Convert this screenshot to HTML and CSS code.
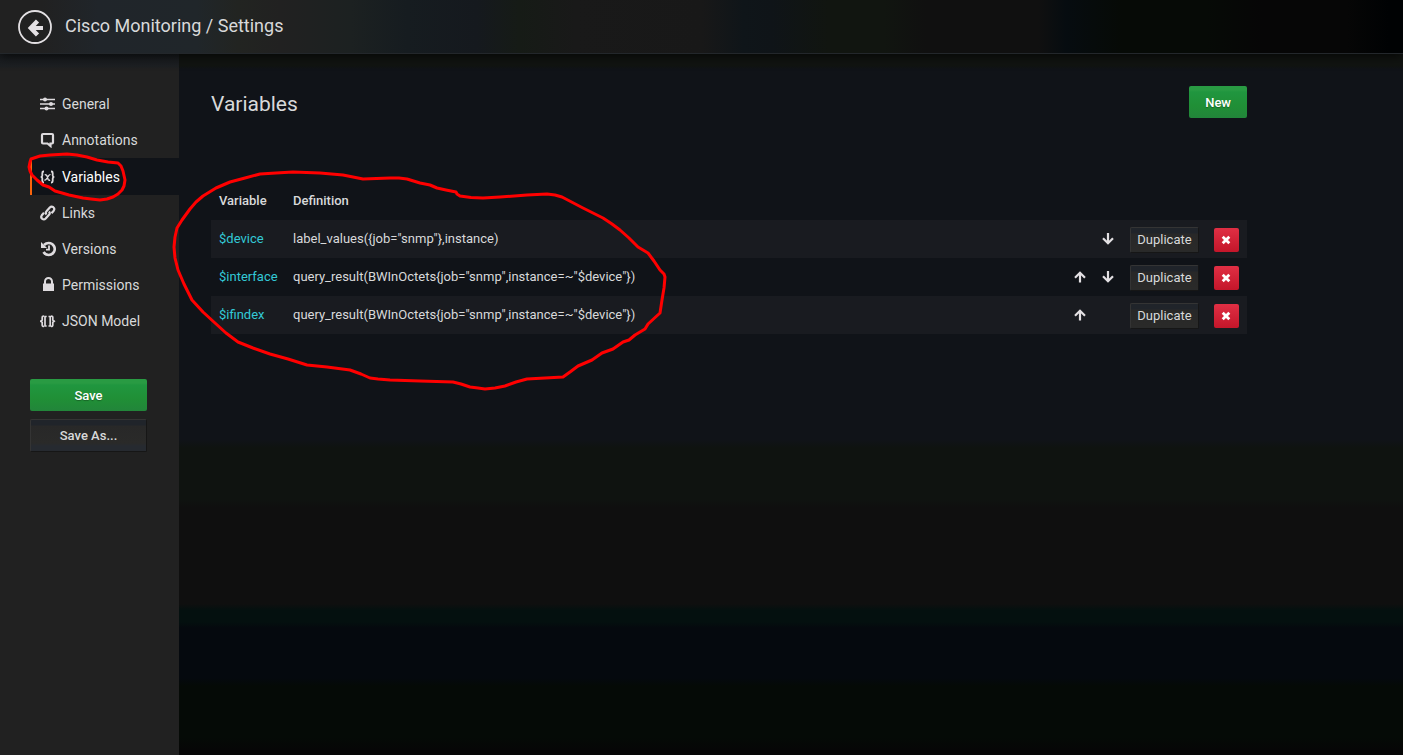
FILE: index.html
```html
<!DOCTYPE html>
<html lang="en">
<head>
<meta charset="utf-8">
<meta name="viewport" content="width=device-width, initial-scale=1">
<title>Cisco Monitoring / Settings</title>
<link rel="stylesheet" href="styles.css">
</head>
<body>
<svg class="sprite" aria-hidden="true">
  <symbol id="up" viewBox="0 0 12 12"><path d="M6 11.500V2M1 6.700 6 1.700l5 5" fill="none" stroke="currentColor" stroke-width="2.200"/></symbol>
  <symbol id="down" viewBox="0 0 12 12"><path d="M6 0V10M1 5.300l5 5 5-5" fill="none" stroke="currentColor" stroke-width="2.200"/></symbol>
  <symbol id="remove" viewBox="0 0 10 10"><path d="m1.700 1.700 6.600 6.600M8.300 1.700 1.700 8.300" fill="none" stroke="currentColor" stroke-width="2.800"/></symbol>
</svg>
<header class="navbar">
  <button class="back" type="button" aria-label="Back">
    <svg width="34" height="34" viewBox="0 0 34 34" fill="none" stroke="currentColor"><circle cx="17" cy="17" r="16" stroke-width="1.800"/><path d="M25 18H13" stroke-width="4"/><path d="M19.500 11 12.800 18l6.700 7" stroke-width="4.400"/></svg>
  </button>
  <h1 class="title">Cisco Monitoring / Settings</h1>
</header>
<div class="layout">
  <aside class="sidebar">
    <nav class="menu">
      <a class="item" href="#general"><svg class="icon" viewBox="0 0 16 16"><path d="M0 3.500h15M0 8h15M0 12.500h15" stroke="currentColor" stroke-width="1.600"/><g fill="currentColor"><circle cx="5" cy="3.500" r="2"/><circle cx="11" cy="8" r="2"/><circle cx="6.500" cy="12.500" r="2"/></g></svg>General</a>
      <a class="item" href="#annotations"><svg class="icon" viewBox="0 0 16 16" fill="none" stroke="currentColor" stroke-width="2.200"><path d="M3 2h9q1 0 1 1v7.500q0 1-1 1h-1.500V14L7.500 11.500H3q-1 0-1-1V3q0-1 1-1z"/></svg>Annotations</a>
      <a class="item active" href="#variables" aria-current="page"><svg class="icon" viewBox="0 0 16 16" fill="none" stroke="currentColor" stroke-width="1.800"><path d="M4 2.500H3.500Q2.300 2.500 2.300 4v2.500Q2.300 8 .7 8q1.600 0 1.600 1.500V12q0 1.500 1.200 1.500H4M11 2.500h.5q1.200 0 1.200 1.500v2.500q0 1.500 1.600 1.500-1.600 0-1.600 1.500V12q0 1.500-1.200 1.500H11"/><path d="M4.700 6q1.500-.8 2.200.8l1.200 3.400q.6 1.500 2 .8M10.500 5.700Q9.500 5.300 8.500 6.800L6.400 10q-.8 1.400-2 .9" stroke-width="1.400"/></svg>Variables</a>
      <a class="item" href="#links"><svg class="icon" viewBox="0 0 16 16" fill="none" stroke="currentColor" stroke-width="2.200"><path d="M6.500 9.500Q5 7.800 6.500 6.300l3.300-3.800q1.600-1.600 3.500-.3 1.800 1.600.4 3.500l-2.200 2.500"/><path d="M9 6.500q1.500 1.700 0 3.200l-3.300 3.800q-1.600 1.600-3.500.3-1.800-1.600-.4-3.500L4 7.800"/></svg>Links</a>
      <a class="item" href="#versions"><svg class="icon" viewBox="0 0 16 16" fill="none" stroke="currentColor"><path d="M4 4Q6 2 8.700 2a6 6 0 1 1-5.200 9" stroke-width="2.600"/><path d="M1 1v6h6z" fill="currentColor" stroke="none"/><path d="M9 4.500V8.700H6" stroke-width="1.800"/></svg>Versions</a>
      <a class="item" href="#permissions"><svg class="icon" viewBox="0 0 16 16"><path d="M3 6.500h11V14H3z" fill="currentColor"/><path d="M5 7V4.500a3.500 3.500 0 0 1 7 0V7" fill="none" stroke="currentColor" stroke-width="2"/></svg>Permissions</a>
      <a class="item" href="#json"><svg class="icon" viewBox="0 0 16 16" fill="none" stroke="currentColor" stroke-width="1.700"><path d="M4 3Q2.200 3 2.200 4.500V7L.8 8.200l1.400 1.200V12Q2.200 13.500 4 13.500M11 3q1.800 0 1.800 1.500V7l1.400 1.200-1.400 1.200V12q0 1.500-1.800 1.500M6.700 3.500H5V13h1.700M8.500 3.500h1.700V13H8.500"/></svg>JSON Model</a>
    </nav>
    <div class="actions">
      <button class="btn primary" type="button">Save</button>
      <button class="btn" type="button">Save As...</button>
    </div>
  </aside>
  <main class="content">
    <div class="panel">
      <div class="heading">
        <h2 class="subtitle">Variables</h2>
        <button class="btn primary" type="button">New</button>
      </div>
      <table class="variables">
        <colgroup><col class="col-name"><col><col class="col-arrow"><col class="col-arrow"><col class="col-copy"><col class="col-remove"></colgroup>
        <thead><tr><th scope="col">Variable</th><th scope="col" colspan="5">Definition</th></tr></thead>
        <tbody>
          <tr>
            <td><a class="name" href="#device">$device</a></td>
            <td>label_values({job="snmp"},instance)</td>
            <td></td>
            <td><button class="move" type="button" aria-label="Move down"><svg width="12" height="12"><use href="#down"/></svg></button></td>
            <td class="control"><button class="btn small" type="button">Duplicate</button></td>
            <td class="control"><button class="btn danger" type="button" aria-label="Remove"><svg width="10" height="10"><use href="#remove"/></svg></button></td>
          </tr>
          <tr>
            <td><a class="name" href="#interface">$interface</a></td>
            <td>query_result(BWInOctets{job="snmp",instance=~"$device"})</td>
            <td><button class="move" type="button" aria-label="Move up"><svg width="12" height="12"><use href="#up"/></svg></button></td>
            <td><button class="move" type="button" aria-label="Move down"><svg width="12" height="12"><use href="#down"/></svg></button></td>
            <td class="control"><button class="btn small" type="button">Duplicate</button></td>
            <td class="control"><button class="btn danger" type="button" aria-label="Remove"><svg width="10" height="10"><use href="#remove"/></svg></button></td>
          </tr>
          <tr>
            <td><a class="name" href="#ifindex">$ifindex</a></td>
            <td>query_result(BWInOctets{job="snmp",instance=~"$device"})</td>
            <td><button class="move" type="button" aria-label="Move up"><svg width="12" height="12"><use href="#up"/></svg></button></td>
            <td></td>
            <td class="control"><button class="btn small" type="button">Duplicate</button></td>
            <td class="control"><button class="btn danger" type="button" aria-label="Remove"><svg width="10" height="10"><use href="#remove"/></svg></button></td>
          </tr>
        </tbody>
      </table>
    </div>
  </main>
</div>
<svg class="markup" width="700" height="420" viewBox="0 0 700 420" aria-hidden="true">
  <path d="M31 159 40 156 50 155 67 154 77 155 87 157 97 160 108 162 118 163 121 166 123 171 125 180 124 186 122 190 118 194 113 197 107 199 100 200 91 199 83 198 69 195 55 191 49 187 43 185 37 180 32 175 30 171 29 167 30 162z"/>
  <path d="M343 175 320 173 293 172 276 173 260 174 245 178 230 182 216 188 203 196 196 202 190 209 182 220 177 228 175 237 174 247 175 258 178 270 184 284 192 300 203 312 215 323 226 333 238 342 253 348 270 354 288 359 307 365 327 367 350 370 361 374 370 378 378 379 390 380 420 381 453 382 461 384 470 387 478 388 485 389 495 388 505 386 516 382 527 379 545 378 563 377 570 372 578 366 592 360 602 353 613 349 623 342 629 340 635 335 645 329 648 324 660 313 662 300 664 288 665 277 664 274 660 270 654 261 648 253 638 247 629 238 620 230 612 224 603 218 583 208 562 197 555 195 547 194 527 195 500 197 483 198 471 197.500 460 196 457 194 456 192 446 190 437 188 430 185 420 183 407 179 399 178 390 178 363 179 353 177z"/>
</svg>
</body>
</html>
```
FILE: styles.css
```css
* { box-sizing: border-box; }

body {
  margin: 0;
  min-height: 100vh;
  display: flex;
  flex-direction: column;
  background: #101318;
  color: #d8d9da;
  font: 13px/20px Roboto, sans-serif;
}

h1, h2 { margin: 0; font-weight: 400; }
a { color: inherit; text-decoration: none; }
button { font: inherit; color: inherit; cursor: pointer; }
svg { display: block; }
.sprite { display: none; }

.navbar {
  position: relative;
  display: flex;
  align-items: center;
  gap: 13px;
  height: 54px;
  padding: 0 18px;
  border-bottom: 1px solid #23272b;
  background: linear-gradient(90deg, #212121 0, #212121 3%, #20252a 7%, #20262a 14%, #222421 17%, #212121 20%, #1c2121 25%, #161c20 29%, #15191e 34%, #161b16 37%, #191919 41%, #181818 50%, #0f1519 53%, #0f1418 55%, #111510 59%, #111510 63%, #101010 66%, #101010 74%, #060c10 76%, #060a06 80%, #060a06 86%, #060606 90%, #060606 96%, #000203 99%);
  box-shadow: 0 2px 10px rgba(0, 0, 0, .7);
  z-index: 1;
}
.back { padding: 0; border: 0; background: none; color: #e3e0e3; }
.title { padding-bottom: 2px; font-size: 18px; line-height: 24px; }

.layout { flex: 1; display: flex; }
.sidebar {
  flex: none;
  width: 179px;
  padding: 32px 0 32px 30px;
  background: linear-gradient(#181b1e, #1c1f22 12px, #212121 15px);
}
.menu { display: flex; flex-direction: column; }
.item {
  display: flex;
  align-items: center;
  gap: 6px;
  height: 36px;
  padding-left: 10px;
  font-size: 14px;
}
.icon { width: 16px; height: 16px; color: #dedbde; }
.active {
  height: 37px;
  padding-left: 8px;
  border-left: 2px solid #f9640c;
  background: #101318;
  color: #fff;
}
.actions {
  display: flex;
  flex-direction: column;
  gap: 8px;
  width: 117px;
  margin-top: 40px;
}

.btn {
  padding: 6px 15px 5px;
  border: 1px solid #343434;
  border-right-color: #161616;
  border-bottom-color: #161616;
  border-radius: 2px;
  background: linear-gradient(#20242a 5px, #282828 6px, #2a2a29 23px, #262a30 26px);
  font-weight: 500;
}
.primary {
  border: 0;
  padding: 7px 16px 5px;
  background: linear-gradient(#299b43 4px, #20963f 6px, #208f36 20px, #22853a);
  color: #fff;
  text-shadow: 0 1px 1px rgba(0, 0, 0, .3);
}
.small {
  display: block;
  width: 69px;
  padding: 2px 0;
  font-weight: 400;
}
.danger {
  display: grid;
  place-items: center;
  width: 25px;
  height: 24px;
  padding: 0;
  border: 0;
  background: linear-gradient(#e02f44, #c4162a);
  color: #fff;
}

.content {
  flex: 1;
  min-width: 0;
  padding: 32px;
  background: linear-gradient(#111411 12px, #101318 15px, #101318 386px, #0f1310 394px, #0f1310 446px, #0f0f0f 454px, #0f0f0f 550px, #04100f 556px, #04100f 568px, #05090e 574px, #05090e 624px, #050a06 632px, #050a06 684px, #060606 696px);
}
.panel { max-width: 1036px; }
.heading {
  display: flex;
  justify-content: space-between;
  align-items: flex-start;
  margin-bottom: 60px;
}
.subtitle { font-size: 21px; line-height: 36px; }

.variables { width: 100%; border-collapse: collapse; table-layout: fixed; }
.variables tr { height: 38px; }
.variables th { padding: 0 8px; text-align: left; font-weight: 500; }
.variables td { padding: 0 8px; white-space: nowrap; }
.variables td.control { padding: 2px 0 0 8px; }
.variables tbody tr:nth-child(odd) { background: #191b20; }
.col-name { width: 74px; }
.col-arrow { width: 28px; }
.col-copy { width: 84px; }
.col-remove { width: 41px; }
.name { color: #33c9d6; }
.move { display: block; padding: 0; border: 0; background: none; color: #e3e0e3; }

.markup {
  position: absolute;
  top: 0;
  left: 0;
  z-index: 2;
  fill: none;
  stroke: #f00;
  stroke-width: 3;
  stroke-linejoin: round;
  pointer-events: none;
}
```
